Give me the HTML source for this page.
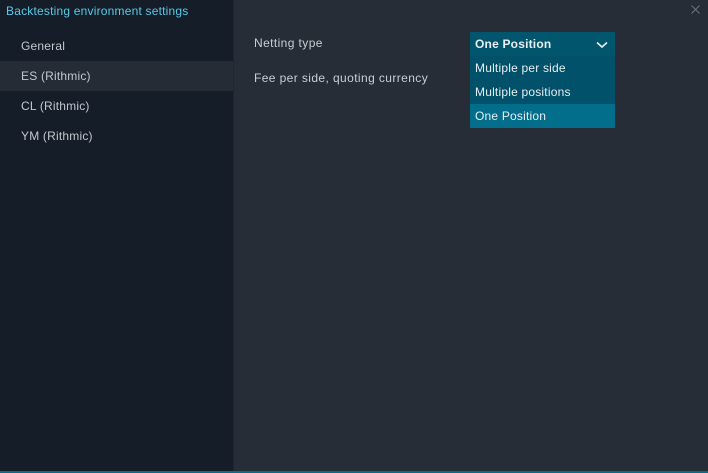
<!DOCTYPE html>
<html><head><style>
html,body{margin:0;padding:0;}
body{width:708px;height:473px;background:#262d37;font-family:"Liberation Sans","DejaVu Sans",sans-serif;position:relative;overflow:hidden;}
.side{position:absolute;left:0;top:0;width:233px;height:471px;background:#151e28;border-right:1px solid #1e2731;}
.title{position:absolute;left:6px;top:4px;font-size:12px;color:#5ac8e8;letter-spacing:0.2px;}
.item{position:absolute;left:0;width:233px;height:30px;line-height:30px;padding-left:21px;box-sizing:border-box;font-size:12px;color:#c2c7cd;letter-spacing:0.2px;}
.sel{background:#252c36;}
.lbl{position:absolute;font-size:12px;color:#c9ced3;letter-spacing:0.4px;}
.dd{position:absolute;left:470px;top:32px;width:145px;font-size:12px;color:#e8eef2;letter-spacing:0.2px;}
.dd div{height:24px;line-height:24px;padding-left:5px;}
.bottom{position:absolute;left:0;bottom:0;width:708px;height:2px;background:#0a6c8a;}
.x{position:absolute;left:691px;top:5px;}
</style></head><body>
<div class="side">
<div class="title">Backtesting environment settings</div>
<div class="item" style="top:31px">General</div>
<div class="item sel" style="top:61px">ES (Rithmic)</div>
<div class="item" style="top:91px">CL (Rithmic)</div>
<div class="item" style="top:121px">YM (Rithmic)</div>
</div>
<div class="lbl" style="left:254px;top:36px">Netting type</div>
<div class="lbl" style="left:254px;top:71px">Fee per side, quoting currency</div>
<svg class="x" width="9" height="9" viewBox="0 0 9 9"><path d="M0.5 0.5 L8.5 8.5 M8.5 0.5 L0.5 8.5" stroke="#6b737c" stroke-width="1"/></svg>
<div class="dd">
<div style="background:#01566d;font-weight:bold;position:relative;line-height:25px;">One Position<svg style="position:absolute;right:7px;top:9px" width="12" height="8" viewBox="0 0 12 8"><path d="M1 1.5 L6 6 L11 1.5" stroke="#e8eef2" stroke-width="1.6" fill="none"/></svg></div>
<div style="background:#005169">Multiple per side</div>
<div style="background:#005169">Multiple positions</div>
<div style="background:#036e8b">One Position</div>
</div>
<div class="bottom"></div>
</body></html>
